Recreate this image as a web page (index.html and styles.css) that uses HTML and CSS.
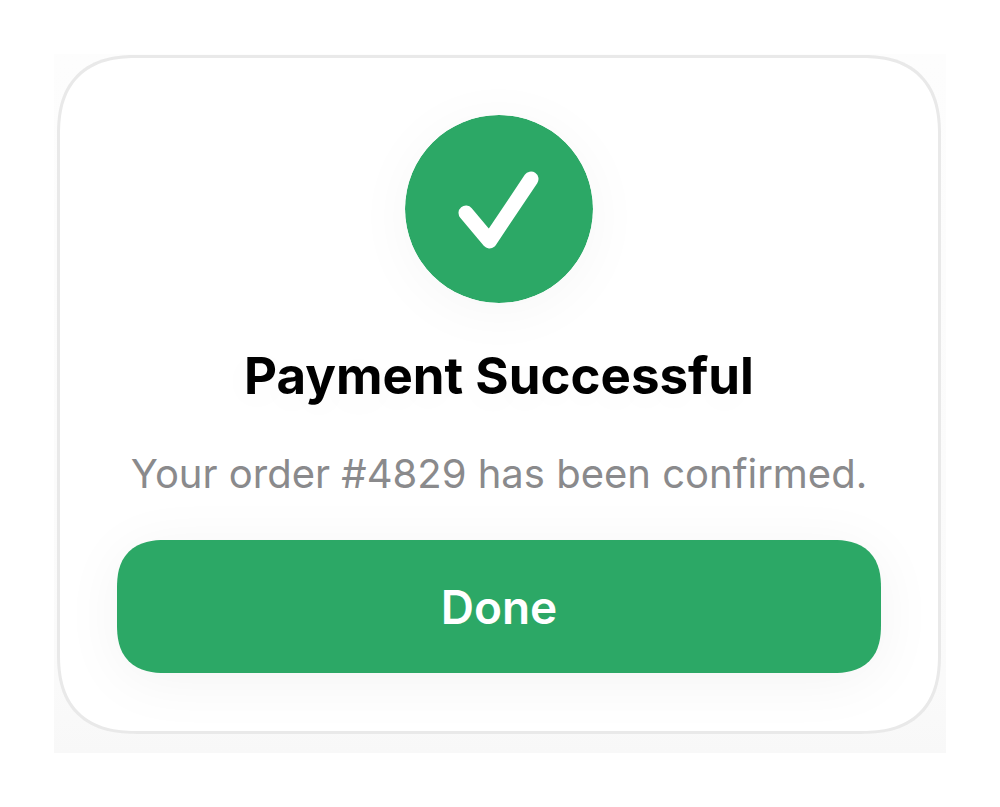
FILE: index.html
```html
<!DOCTYPE html>
<html lang="en">
<head>
<meta charset="utf-8">
<meta name="viewport" content="width=device-width, initial-scale=1">
<title>Payment Successful</title>
<link rel="stylesheet" href="styles.css">
</head>
<body>
<main class="page">
  <div class="backdrop">
    <section class="card">
      <svg class="badge" viewBox="0 0 188 188" aria-hidden="true">
        <circle cx="94" cy="94" r="94" fill="#2ca866"/>
        <path d="M61 98L84.500 126L126 64" fill="none" stroke="#fff" stroke-width="15" stroke-linecap="round" stroke-linejoin="round"/>
      </svg>
      <h1 class="title">Payment Successful</h1>
      <p class="message">Your order #4829 has been confirmed.</p>
      <button class="done" type="button">Done</button>
    </section>
  </div>
</main>
</body>
</html>
```
FILE: styles.css
```css
* {
  box-sizing: border-box;
}

body {
  margin: 0;
  background: #fff;
  font-family: Inter, "Liberation Sans", sans-serif;
}

.page {
  padding: 54px;
}

.backdrop {
  padding: 1px 5px 19px 3px;
  background: linear-gradient(#fdfdfd, #fafafa 90%, #f8f8f8);
}

.card {
  display: flex;
  flex-direction: column;
  align-items: center;
  padding: 57px 57px 58px;
  border: 3px solid #e9e9e9;
  border-radius: 72px;
  background: #fff;
}

.badge {
  display: block;
  width: 188px;
  height: 188px;
  border-radius: 50%;
  box-shadow: 0 8px 60px rgba(0, 0, 0, 0.04);
}

.title {
  margin: 41px 0 0;
  font-size: 51px;
  font-weight: 700;
  line-height: 64px;
  color: #000;
  text-shadow: 0 8px 40px rgba(0, 0, 0, 0.04);
}

.message {
  margin: 40px 0 0;
  font-size: 40px;
  line-height: 52px;
  color: #8a8a8c;
}

.done {
  align-self: stretch;
  height: 133px;
  margin-top: 40px;
  border: 0;
  border-radius: 40px;
  background: #2ca866;
  box-shadow: 0 8px 60px rgba(0, 0, 0, 0.05);
  color: #fff;
  font-family: inherit;
  font-size: 46px;
  font-weight: 600;
}

/* Continuous corners, where the browser can draw them */
@supports (corner-shape: superellipse(1.3)) {
  .card {
    border-radius: 80px;
    corner-shape: superellipse(1.3);
  }

  .done {
    border-radius: 48px;
    corner-shape: superellipse(1.3);
  }
}
```
